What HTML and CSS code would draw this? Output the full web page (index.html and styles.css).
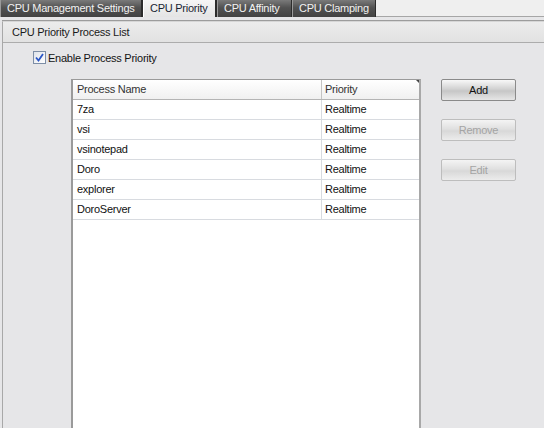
FILE: index.html
```html
<!DOCTYPE html>
<html>
<head>
<meta charset="utf-8">
<link rel="stylesheet" href="styles.css">
</head>
<body>
<div class="tabs">
  <div class="tab t1">CPU Management Settings</div>
  <div class="tab active t2">CPU Priority</div>
  <div class="tab t3">CPU Affinity</div>
  <div class="tab t4">CPU Clamping</div>
  <div class="tab-rest"></div>
</div>
<div class="panel">
  <div class="group-head">CPU Priority Process List</div>
  <div class="content">
    <label class="check">
      <span class="box"><svg width="11" height="11" viewBox="0 0 11 11"><path d="M2 5.5 L4.5 8.5 L9 2" fill="none" stroke="#2a56c6" stroke-width="1.8"/></svg></span>
      <span>Enable Process Priority</span>
    </label>
    <div class="main">
      <div class="list">
        <div class="row head">
          <div class="c1">Process Name</div>
          <div class="c2">Priority<span class="grip"></span></div>
        </div>
        <div class="row"><div class="c1">7za</div><div class="c2">Realtime</div></div>
        <div class="row"><div class="c1">vsi</div><div class="c2">Realtime</div></div>
        <div class="row"><div class="c1">vsinotepad</div><div class="c2">Realtime</div></div>
        <div class="row"><div class="c1">Doro</div><div class="c2">Realtime</div></div>
        <div class="row"><div class="c1">explorer</div><div class="c2">Realtime</div></div>
        <div class="row"><div class="c1">DoroServer</div><div class="c2">Realtime</div></div>
        <div class="fill"></div>
      </div>
      <div class="buttons">
        <button class="btn">Add</button>
        <button class="btn disabled">Remove</button>
        <button class="btn disabled">Edit</button>
      </div>
    </div>
  </div>
</div>
</body>
</html>
```

FILE: styles.css
```css
html, body {
  margin: 0;
  padding: 0;
}
body {
  width: 544px;
  height: 428px;
  overflow: hidden;
  background: #e6e6e8;
  font-family: "Liberation Sans", Arial, sans-serif;
  font-size: 11px;
  letter-spacing: -0.25px;
  color: #111;
}
.tabs {
  display: flex;
  height: 17px;
  background: #efefef;
}
.tab {
  box-sizing: border-box;
  height: 17px;
  line-height: 16px;
  padding: 0 7px;
  color: #f2f2f2;
  background: linear-gradient(#7a7a7a, #525252 45%, #424242);
  border-right: 1px solid #2c2c2c;
  box-shadow: inset 1px 0 0 #9a9a9a;
  white-space: nowrap;
}
.t1 { width: 142px; padding-left: 7px; }
.t2 { width: 75px; }
.t3 { width: 75px; }
.t4 { width: 84px; }
.tab.active {
  background: linear-gradient(#f6f6f6, #e4e4e4);
  color: #1a1f33;
  border-left: 1px solid #2c2c2c;
  border-right: 2px solid #2c2c2c;
  box-shadow: inset 1px 0 0 #fff;
  padding-left: 7px;
}
.tab-rest {
  flex: 1;
  border-bottom: 1px solid #a6a6a6;
}
.panel {
  border-top: 1px solid #d6d6d6;
  margin-top: 4px;
  border-left: 1px solid #a8a8a8;
  margin-left: 2px;
  box-shadow: 0 -1px 0 #9c9c9c;
}
.group-head {
  height: 20px;
  line-height: 20px;
  padding-left: 9px;
  background: linear-gradient(#ececec, #e2e2e2);
  border-bottom: 1px solid #acacac;
  color: #1a1a1a;
}
.content {
  padding-top: 8px;
}
.check {
  display: flex;
  align-items: center;
  height: 13px;
  padding-left: 30px;
  gap: 2px;
  color: #141414;
}
.box {
  box-sizing: border-box;
  width: 13px;
  height: 13px;
  border: 1px solid #7d8ea6;
  background: linear-gradient(135deg, #dfe3ea, #ffffff);
  display: flex;
  align-items: center;
  justify-content: center;
}
.box svg { display: block; }
.main {
  display: flex;
  margin-top: 15px;
  padding-left: 68px;
  gap: 20px;
}
.list {
  box-sizing: border-box;
  width: 350px;
  height: 420px;
  background: #fff;
  border: 1px solid #9a9a9a;
  border-left: 2px solid #9a9a9a;
  border-right: 2px solid #a8a8a8;
  display: flex;
  flex-direction: column;
}
.row {
  display: flex;
  height: 20px;
  box-sizing: border-box;
  border-bottom: 1px solid #d8dbe0;
  line-height: 19px;
}
.row.head {
  background: linear-gradient(#ffffff, #f0f0f0);
  border-bottom: 1px solid #b4b4b4;
  color: #333;
}
.c1 {
  box-sizing: border-box;
  width: 249px;
  padding-left: 4px;
  border-right: 1px solid #d8dbe0;
}
.row.head .c1 { border-right-color: #c4c4c4; }
.c2 {
  position: relative;
  flex: 1;
  padding-left: 3px;
}
.grip {
  position: absolute;
  right: 0;
  top: 0;
  width: 0;
  height: 0;
  border-top: 3px solid #444;
  border-left: 3px solid transparent;
}
.fill {
  flex: 1;
}
.buttons {
  display: flex;
  flex-direction: column;
  gap: 18px;
}
.btn {
  box-sizing: border-box;
  width: 75px;
  height: 22px;
  font-family: "Liberation Sans", Arial, sans-serif;
  font-size: 11px;
  letter-spacing: -0.25px;
  font-weight: normal;
  color: #111;
  border: 1px solid #8a8a8a;
  border-radius: 2px;
  background: linear-gradient(#f8f8f8, #d2d2d2 45%, #c6c6c6 55%, #e6e6e6);
  padding: 0;
}
.btn.disabled {
  color: #a4a4a4;
  border-color: #bdbdbd;
  background: linear-gradient(#f4f4f4, #e0e0e0 45%, #d8d8d8 55%, #ececec);
}
```
